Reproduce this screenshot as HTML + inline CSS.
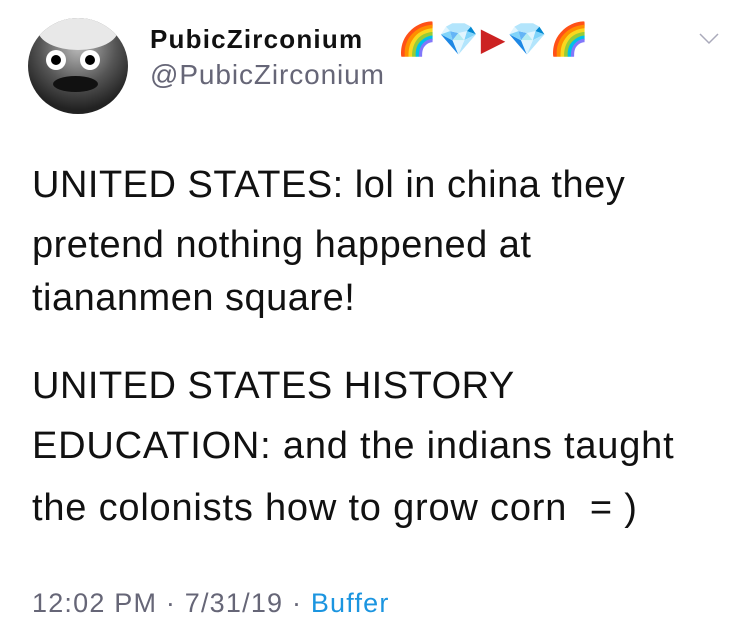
<html><head><style>
body{margin:0;width:750px;height:643px;background:#fff;font-family:"Liberation Sans",sans-serif;position:relative;overflow:hidden}
.a{position:absolute;left:28px;top:18px;width:100px;height:96px;border-radius:50%;background:radial-gradient(circle at 50% 30%,#bbb 0,#555 45%,#222 75%);overflow:hidden}
.t{position:absolute;left:32px;font-size:38px;color:#111;letter-spacing:0.5px;white-space:nowrap}
</style></head><body>
<div class="a">
<div style="position:absolute;left:10px;top:-8px;width:80px;height:40px;background:#e8e8e8;border-radius:50%"></div>
<div style="position:absolute;left:18px;top:32px;width:20px;height:20px;background:#fff;border-radius:50%"><div style="margin:5px;width:10px;height:10px;background:#000;border-radius:50%"></div></div>
<div style="position:absolute;left:52px;top:32px;width:20px;height:20px;background:#fff;border-radius:50%"><div style="margin:5px;width:10px;height:10px;background:#000;border-radius:50%"></div></div>
<div style="position:absolute;left:25px;top:58px;width:45px;height:16px;background:#111;border-radius:50%"></div>
</div>
<div style="position:absolute;left:150px;top:24px;font-size:26px;font-weight:bold;color:#111;letter-spacing:1.2px">PubicZirconium</div>
<div style="position:absolute;left:397px;top:20px;font-size:32px;letter-spacing:2px">🌈💎<span style="color:#c22">▶</span>💎🌈</div>
<div style="position:absolute;left:150px;top:59px;font-size:28px;color:#667;letter-spacing:0.9px">@PubicZirconium</div>
<svg style="position:absolute;left:698px;top:32px" width="22" height="14"><path d="M2 2 L11 11 L20 2" stroke="#aab" stroke-width="1.5" fill="none"/></svg>
<div class="t" style="top:164px">UNITED STATES: lol in china they</div>
<div class="t" style="top:224px">pretend nothing happened at</div>
<div class="t" style="top:277px">tiananmen square!</div>
<div class="t" style="top:365px">UNITED STATES HISTORY</div>
<div class="t" style="top:425px;letter-spacing:0.8px">EDUCATION: and the indians taught</div>
<div class="t" style="top:487px;letter-spacing:0.8px">the colonists how to grow corn &nbsp;= )</div>
<div style="position:absolute;left:32px;top:588px;font-size:27px;color:#667;letter-spacing:1.2px">12:02 PM · 7/31/19 · <span style="color:#1b95e0">Buffer</span></div>
</body></html>
